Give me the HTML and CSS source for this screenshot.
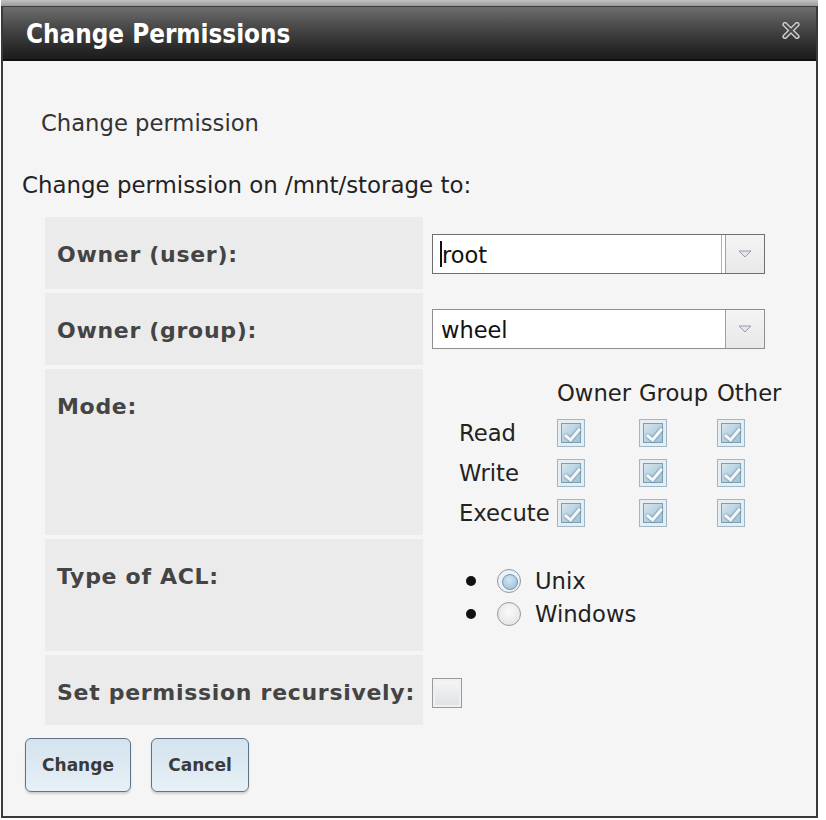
FILE: index.html
```html
<!DOCTYPE html>
<html>
<head>
<meta charset="utf-8">
<link rel="stylesheet" href="styles.css">
</head>
<body>
<div class="dialog">
  <div class="topstrip"></div>
  <div class="titlebar">
    <span class="title">Change Permissions</span>
    <svg class="close" width="20" height="17" viewBox="0 0 20 17">
      <path d="M4 2.5 L16 14.5 M16 2.5 L4 14.5" stroke="#cfcfcf" stroke-width="5.2" stroke-linecap="round"/>
      <path d="M4 2.5 L16 14.5 M16 2.5 L4 14.5" stroke="#4a4a4a" stroke-width="2.4" stroke-linecap="round"/>
    </svg>
  </div>
  <div class="content">
    <div class="subtitle">Change permission</div>
    <div class="intro">Change permission on /mnt/storage to:</div>
    <div class="form">
      <div class="label">Owner (user):</div>
      <div class="value v1">
        <div class="select focused"><span class="caret"></span><span class="sel-text">root</span><span class="arrow"><svg width="14" height="8" viewBox="0 0 14 8"><path d="M1 1 H13 L7 7 Z" fill="#e4e4ea" stroke="#9a9aa8" stroke-width="1"/></svg></span></div>
      </div>
      <div class="label">Owner (group):</div>
      <div class="value v2">
        <div class="select"><span class="sel-text">wheel</span><span class="arrow"><svg width="14" height="8" viewBox="0 0 14 8"><path d="M1 1 H13 L7 7 Z" fill="#e4e4ea" stroke="#9a9aa8" stroke-width="1"/></svg></span></div>
      </div>
      <div class="label">Mode:</div>
      <div class="value v3">
        <div class="mode">
          <span></span><span class="mh">Owner</span><span class="mh">Group</span><span class="mh">Other</span>
          <span class="ml">Read</span><span class="cb on"></span><span class="cb on"></span><span class="cb on"></span>
          <span class="ml">Write</span><span class="cb on"></span><span class="cb on"></span><span class="cb on"></span>
          <span class="ml">Execute</span><span class="cb on"></span><span class="cb on"></span><span class="cb on"></span>
        </div>
      </div>
      <div class="label">Type of ACL:</div>
      <div class="value v4">
        <div class="radio-row"><span class="bullet"></span><span class="radio checked"></span><span class="rtext">Unix</span></div>
        <div class="radio-row"><span class="bullet"></span><span class="radio"></span><span class="rtext">Windows</span></div>
      </div>
      <div class="label">Set permission recursively:</div>
      <div class="value v5"><span class="cb-empty"></span></div>
    </div>
    <div class="buttons">
      <button class="btn btn-change">Change</button>
      <button class="btn btn-cancel">Cancel</button>
    </div>
  </div>
</div>
</body>
</html>
```
FILE: styles.css
```css
html, body {
  margin: 0;
  padding: 0;
  background: #ffffff;
}
body {
  font-family: "DejaVu Sans", Verdana, sans-serif;
  color: #222;
}
.dialog {
  margin-left: 1px;
  width: 813px;
  height: 816px;
  border: 2px solid #3a3a3a;
  border-top: none;
  background: #f6f5f5;
  box-sizing: content-box;
}
.topstrip {
  height: 6px;
  background: linear-gradient(#c2c2c2, #9a9a9a);
  margin: 0 -2px;
  border-bottom: 1px solid #3c3c3c;
}
.titlebar {
  height: 52px;
  background: linear-gradient(#6e6e6e 0%, #4c4c4c 35%, #282828 80%, #1c1c1c 100%);
  border-bottom: 2px solid #111;
  display: flex;
  align-items: center;
  justify-content: space-between;
  padding: 0 15px 0 23px;
}
.title {
  font-family: "DejaVu Sans Condensed", "DejaVu Sans", sans-serif;
  font-weight: bold;
  font-size: 25.8px;
  color: #ffffff;
  margin-top: 2px;
}
.close {
  margin-top: -6px;
}
.content {
  padding-left: 19px;
}
.subtitle {
  margin-top: 50px;
  padding-left: 19px;
  font-size: 22.7px;
  line-height: 24px;
  color: #333;
}
.intro {
  margin-top: 38px;
  font-size: 22.9px;
  line-height: 24px;
  color: #222;
}
.form {
  margin-top: 20px;
  margin-left: 23px;
  display: grid;
  grid-template-columns: 378px 1fr;
  grid-template-rows: 72px 72px 166px 112px 70px;
  row-gap: 4px;
}
.label {
  background: #ebebeb;
  padding: 26px 0 0 12px;
  font-weight: bold;
  font-size: 22px;
  line-height: 24px;
  color: #444;
  letter-spacing: 0.7px;
  white-space: nowrap;
}
.value {
  padding-left: 9px;
}
.v1 { padding-top: 17px; }
.v2 { padding-top: 16px; }
.select {
  width: 331px;
  height: 38px;
  border: 1px solid #8e8e8e;
  background: #fff;
  display: flex;
  align-items: center;
  font-size: 22.5px;
  color: #111;
}
.select.focused {
  border-color: #6f6f6f;
}
.sel-text {
  padding-left: 8px;
  flex: 1;
  padding-top: 2px;
}
.focused .sel-text { padding-left: 0; }
.caret {
  display: inline-block;
  width: 2px;
  height: 26px;
  background: #111;
  margin-left: 7px;
}
.arrow {
  width: 38px;
  height: 38px;
  border-left: 1px solid #a0a0a0;
  background: linear-gradient(#f4f4f4, #e8e8e8);
  display: flex;
  align-items: center;
  justify-content: center;
}
.focused .arrow {
  box-shadow: -3px 0 0 #fff, -4px 0 0 #b0b0b0;
}
.v3 { padding-left: 36px; padding-top: 4px; }
.mode {
  display: grid;
  grid-template-columns: 98px 82px 78px 70px;
  grid-auto-rows: 40px;
  align-items: center;
  font-size: 22.7px;
  color: #222;
}
.cb {
  width: 28px;
  height: 28px;
  box-sizing: border-box;
  border: 1px solid #9fb6c4;
  background: #e6eef3;
  position: relative;
}
.cb::before {
  content: "";
  position: absolute;
  left: 3px; top: 3px; right: 3px; bottom: 3px;
  border: 1px solid #7d9fb4;
  background: linear-gradient(135deg, #d7e6ef 0%, #b4cfdf 60%, #a4c2d6 100%);
}
.cb.on::after {
  content: "";
  position: absolute;
  left: 10px; top: 5px;
  width: 6px; height: 13px;
  border: solid #f4f8fb;
  border-width: 0 3px 3px 0;
  transform: rotate(40deg);
  filter: drop-shadow(0 0 0.8px #3f6680);
}
.v4 { padding-top: 25px; padding-left: 43px; }
.radio-row {
  display: flex;
  align-items: center;
  height: 33px;
  font-size: 22.7px;
}
.bullet {
  width: 10px;
  height: 10px;
  border-radius: 50%;
  background: #111;
  margin-right: 21px;
  flex-shrink: 0;
}
.radio {
  width: 24px;
  height: 24px;
  box-sizing: border-box;
  border-radius: 50%;
  border: 1px solid #9a9a9a;
  background: radial-gradient(circle at 50% 40%, #fbfbfb, #dedede);
  position: relative;
  margin-right: 14px;
  flex-shrink: 0;
}
.radio.checked {
  border-color: #8a98a4;
  background: #eef2f5;
}
.radio.checked::after {
  content: "";
  position: absolute;
  left: 4px; top: 4px;
  width: 14px; height: 14px;
  border-radius: 50%;
  border: 1px solid #6f95b2;
  background: radial-gradient(circle at 45% 35%, #d4e6f3, #94bad6);
}
.v5 { padding-top: 23px; }
.cb-empty {
  display: block;
  width: 30px;
  height: 30px;
  box-sizing: border-box;
  border: 1px solid #9a9a9a;
  background: linear-gradient(#f6f6f6, #dde2e6);
  box-shadow: inset 0 0 0 2px #eef0f2;
}
.buttons {
  display: flex;
  gap: 20px;
  margin-top: 13px;
  margin-left: 3px;
}
.btn {
  height: 54px;
  border: 1px solid #5f7585;
  border-radius: 6px;
  background: linear-gradient(#d3e3ee, #e7f0f6);
  font-family: "DejaVu Sans", sans-serif;
  font-size: 17px;
  font-weight: bold;
  color: #3a3a3a;
  box-shadow: 0 2px 2px rgba(0,0,0,0.15);
  padding: 0;
}
.btn-change { width: 106px; }
.btn-cancel { width: 98px; }
```
